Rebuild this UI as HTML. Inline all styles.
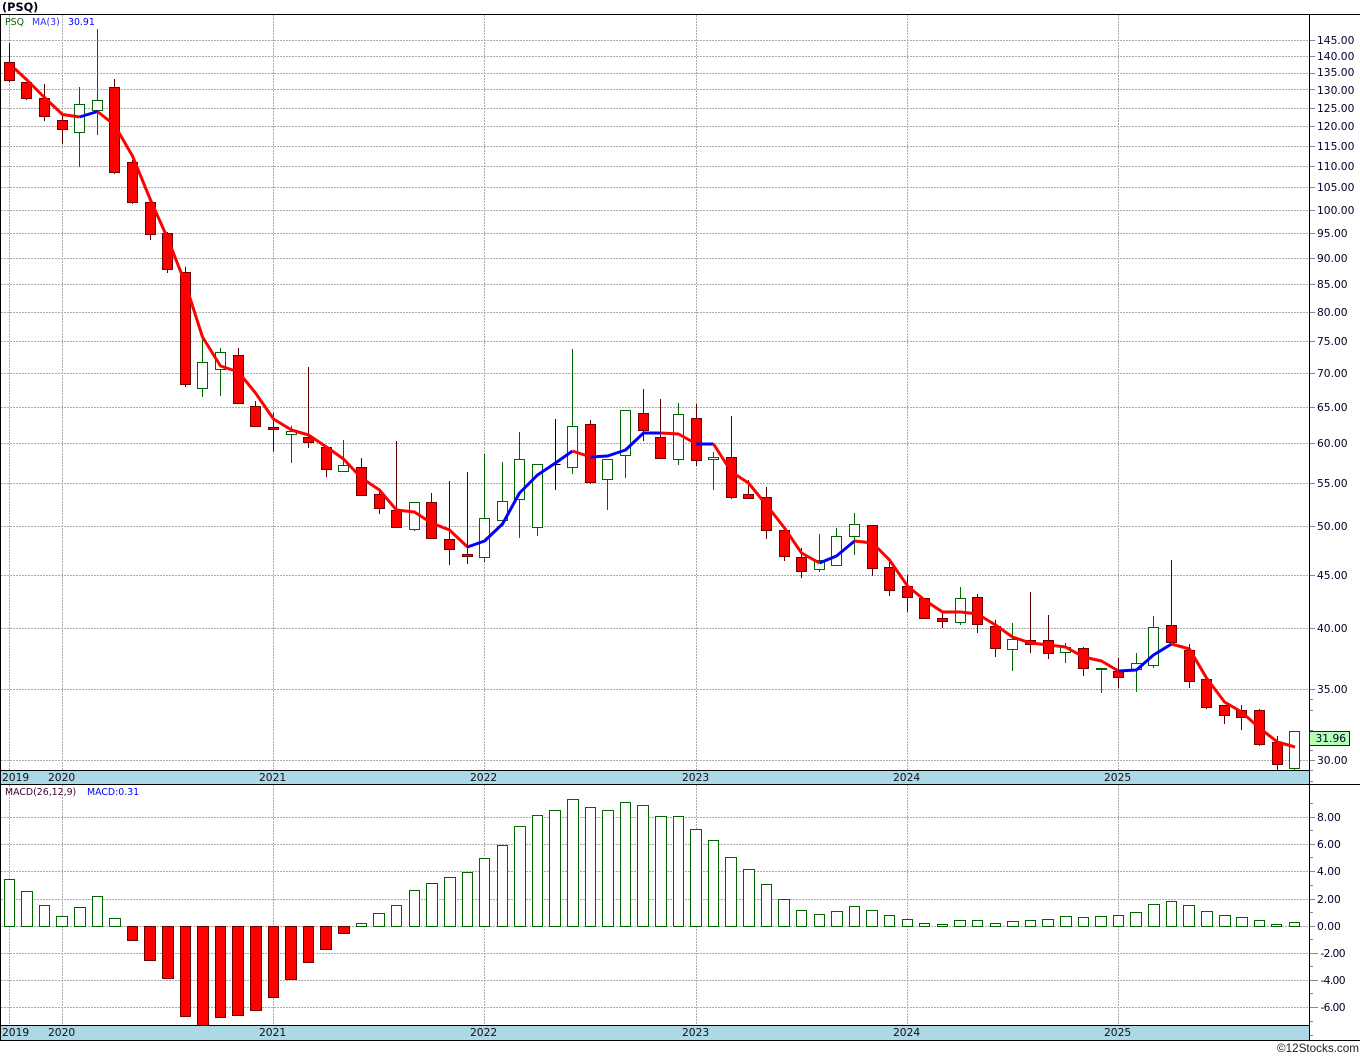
<!DOCTYPE html>
<html><head><meta charset="utf-8"><title>PSQ</title>
<style>
html,body{margin:0;padding:0;background:#fff;width:1360px;height:1056px;overflow:hidden}
svg{position:absolute;left:0;top:0;display:block}
text{font-family:"DejaVu Sans","Liberation Sans",sans-serif;font-size:10.7px;fill:#00002a}
.y{fill:#111}
.s{font-size:9.4px}
</style></head><body>
<svg width="1360" height="1056" viewBox="0 0 1360 1056" xmlns="http://www.w3.org/2000/svg">
<!-- bands -->
<rect x="1" y="770" width="1308" height="14" fill="#add8e6"/>
<rect x="1" y="1025" width="1308" height="15" fill="#add8e6"/>
<!-- grid -->
<g fill="none" stroke="#ababab" stroke-width="1" stroke-dasharray="2 1" shape-rendering="crispEdges">
<path d="M1 40.5H1309M1 56.5H1309M1 73.5H1309M1 89.5H1309M1 108.5H1309M1 126.5H1309M1 146.5H1309M1 166.5H1309M1 187.5H1309M1 210.5H1309M1 233.5H1309M1 258.5H1309M1 284.5H1309M1 312.5H1309M1 341.5H1309M1 373.5H1309M1 407.5H1309M1 443.5H1309M1 483.5H1309M1 526.5H1309M1 575.5H1309M1 628.5H1309M1 689.5H1309M1 760.5H1309"/>
<path d="M1 817.5H1309M1 844.5H1309M1 871.5H1309M1 899.5H1309M1 926.5H1309M1 953.5H1309M1 980.5H1309M1 1007.5H1309"/>
<path d="M9.5 15V770M62.5 15V770M273.5 15V770M484.5 15V770M696.5 15V770M907.5 15V770M1118.5 15V770"/>
<path d="M9.5 785V1025M62.5 785V1025M273.5 785V1025M484.5 785V1025M696.5 785V1025M907.5 785V1025M1118.5 785V1025"/>
</g>
<!-- axis ticks -->
<path shape-rendering="crispEdges" fill="none" stroke="#888" d="M1310 40.5h5M1310 56.5h5M1310 73.5h5M1310 89.5h5M1310 108.5h5M1310 126.5h5M1310 146.5h5M1310 166.5h5M1310 187.5h5M1310 210.5h5M1310 233.5h5M1310 258.5h5M1310 284.5h5M1310 312.5h5M1310 341.5h5M1310 373.5h5M1310 407.5h5M1310 443.5h5M1310 483.5h5M1310 526.5h5M1310 575.5h5M1310 628.5h5M1310 689.5h5M1310 760.5h5M1310 817.5h5M1310 844.5h5M1310 871.5h5M1310 899.5h5M1310 926.5h5M1310 953.5h8M1310 980.5h8M1310 1007.5h8M1310 699.5h3M1310 710.5h3M1310 730.5h3M1310 750.5h3M1310 770.5h3M1310 781.5h3M1310 803.5h3M1310 830.5h3M1310 857.5h3M1310 885.5h3M1310 912.5h3M1310 939.5h3M1310 966.5h3M1310 993.5h3M1310 1021.5h3M1310 1035.5h3"/>
<!-- wicks -->
<g shape-rendering="crispEdges" fill="none" stroke-width="1">
<path stroke="#5a0000" d="M9.5 43V82M26.5 82V100M44.5 84V121M62.5 116V144M114.5 79V174M132.5 160V204M150.5 200V240M167.5 232V273M185.5 267V387M238.5 348V403M255.5 401V427M273.5 413V452M308.5 367V448M326.5 447V477M361.5 458V496M379.5 490V514M396.5 441V528M431.5 493V539M449.5 481V565M467.5 472V564M590.5 420V484M643.5 389V441M660.5 399V458M696.5 404V466M731.5 416V499M748.5 480V498M766.5 487V539M784.5 530V561M801.5 548V578M872.5 525V576M889.5 561V596M907.5 575V612M924.5 598V619M942.5 611V628M977.5 594V633M995.5 620V657M1030.5 592V653M1048.5 615V659M1083.5 647V676M1118.5 658V688M1171.5 560V642M1189.5 644V688M1206.5 679V709M1224.5 705V724M1241.5 705V730M1259.5 709V746M1277.5 736V771"/>
<path stroke="#006400" d="M79.5 87V167M97.5 29V135M202.5 337V397M220.5 348V396M291.5 426V463M343.5 440V472M414.5 502V531M484.5 454V562M502.5 462V521M519.5 432V538M537.5 464V536M572.5 349V474M607.5 459V510M625.5 410V478M678.5 403V465M713.5 452V490M819.5 534V572M836.5 528V566M854.5 513V555M960.5 587V625M1012.5 623V671M1065.5 643V663M1101.5 668V693M1136.5 653V692M1153.5 616V668M1294.5 731V770"/>
<path stroke="#000" d="M555.5 419V490M550.5 464.5h10"/>
<!-- bodies -->
<path fill="#f00" stroke="#700000" d="M4.5 62.5h10v18h-10zM21.5 82.5h10v16h-10zM39.5 98.5h10v18h-10zM57.5 120.5h10v9h-10zM109.5 87.5h10v85h-10zM127.5 162.5h10v40h-10zM145.5 202.5h10v32h-10zM162.5 233.5h10v36h-10zM180.5 272.5h10v112h-10zM233.5 355.5h10v48h-10zM250.5 406.5h10v20h-10zM268.5 427.5h10v2h-10zM303.5 437.5h10v5h-10zM321.5 447.5h10v22h-10zM356.5 467.5h10v28h-10zM374.5 494.5h10v14h-10zM391.5 510.5h10v17h-10zM426.5 502.5h10v36h-10zM444.5 539.5h10v10h-10zM462.5 554.5h10v2h-10zM585.5 424.5h10v58h-10zM638.5 413.5h10v17h-10zM655.5 437.5h10v21h-10zM691.5 418.5h10v42h-10zM726.5 457.5h10v40h-10zM743.5 494.5h10v4h-10zM761.5 497.5h10v33h-10zM779.5 530.5h10v26h-10zM796.5 557.5h10v14h-10zM867.5 525.5h10v43h-10zM884.5 567.5h10v23h-10zM902.5 586.5h10v11h-10zM919.5 598.5h10v20h-10zM937.5 618.5h10v3h-10zM972.5 597.5h10v27h-10zM990.5 626.5h10v22h-10zM1025.5 640.5h10v4h-10zM1043.5 640.5h10v13h-10zM1078.5 648.5h10v20h-10zM1113.5 671.5h10v6h-10zM1166.5 625.5h10v17h-10zM1184.5 650.5h10v31h-10zM1201.5 679.5h10v28h-10zM1219.5 705.5h10v10h-10zM1236.5 710.5h10v7h-10zM1254.5 710.5h10v34h-10zM1272.5 742.5h10v22h-10z"/>
<path fill="#fff" stroke="#006400" d="M74.5 104.5h10v28h-10zM92.5 100.5h10v10h-10zM197.5 362.5h10v26h-10zM215.5 352.5h10v17h-10zM286.5 431.5h10v3h-10zM338.5 465.5h10v6h-10zM409.5 502.5h10v27h-10zM479.5 518.5h10v39h-10zM497.5 501.5h10v19h-10zM514.5 459.5h10v40h-10zM532.5 464.5h10v63h-10zM567.5 426.5h10v41h-10zM602.5 459.5h10v20h-10zM620.5 410.5h10v45h-10zM673.5 414.5h10v45h-10zM708.5 457.5h10v2h-10zM814.5 560.5h10v9h-10zM831.5 536.5h10v29h-10zM849.5 524.5h10v12h-10zM955.5 598.5h10v24h-10zM1007.5 639.5h10v10h-10zM1060.5 647.5h10v5h-10zM1096.5 668.5h10v1h-10zM1131.5 663.5h10v6h-10zM1148.5 627.5h10v38h-10zM1289.5 731.5h10v37h-10z"/>
<!-- MACD bars -->
<path fill="#fff" stroke="#006400" stroke-width="1" d="M4.5 879.5h10v47h-10zM21.5 891.5h11v35h-11zM39.5 905.5h10v21h-10zM56.5 916.5h11v10h-11zM74.5 907.5h11v19h-11zM92.5 896.5h10v30h-10zM109.5 918.5h11v8h-11zM356.5 923.5h10v3h-10zM373.5 913.5h11v13h-11zM391.5 905.5h10v21h-10zM409.5 890.5h10v36h-10zM426.5 883.5h11v43h-11zM444.5 877.5h11v49h-11zM462.5 872.5h10v54h-10zM479.5 858.5h10v68h-10zM497.5 845.5h10v81h-10zM514.5 826.5h11v100h-11zM532.5 815.5h10v111h-10zM549.5 810.5h11v116h-11zM567.5 799.5h11v127h-11zM585.5 807.5h10v119h-10zM602.5 810.5h11v116h-11zM620.5 802.5h10v124h-10zM637.5 805.5h11v121h-11zM655.5 816.5h11v110h-11zM673.5 816.5h10v110h-10zM690.5 829.5h11v97h-11zM708.5 840.5h10v86h-10zM725.5 857.5h11v69h-11zM743.5 869.5h11v57h-11zM761.5 884.5h10v42h-10zM778.5 899.5h11v27h-11zM796.5 910.5h10v16h-10zM814.5 914.5h10v12h-10zM831.5 911.5h11v15h-11zM849.5 906.5h10v20h-10zM866.5 910.5h11v16h-11zM884.5 915.5h10v11h-10zM902.5 919.5h10v7h-10zM919.5 923.5h10v3h-10zM937.5 924.5h10v2h-10zM954.5 920.5h11v6h-11zM972.5 920.5h10v6h-10zM990.5 923.5h10v3h-10zM1007.5 921.5h11v5h-11zM1025.5 920.5h10v6h-10zM1042.5 919.5h11v7h-11zM1060.5 916.5h11v10h-11zM1078.5 917.5h10v9h-10zM1095.5 916.5h11v10h-11zM1113.5 915.5h10v11h-10zM1130.5 912.5h11v14h-11zM1148.5 904.5h11v22h-11zM1166.5 901.5h10v25h-10zM1183.5 905.5h11v21h-11zM1201.5 911.5h11v15h-11zM1219.5 915.5h11v11h-11zM1236.5 917.5h11v9h-11zM1254.5 920.5h10v6h-10zM1271.5 924.5h10v2h-10zM1289.5 922.5h10v4h-10z"/>
<path fill="#f00" stroke="#700000" stroke-width="1" d="M127.5 926.5h10v14h-10zM144.5 926.5h11v34h-11zM162.5 926.5h11v52h-11zM180.5 926.5h10v90h-10zM197.5 926.5h11v99h-11zM215.5 926.5h10v91h-10zM232.5 926.5h11v89h-11zM250.5 926.5h11v84h-11zM268.5 926.5h10v71h-10zM285.5 926.5h11v53h-11zM303.5 926.5h10v36h-10zM320.5 926.5h11v23h-11zM338.5 926.5h11v7h-11z"/>
</g>
<!-- MA line -->
<g fill="none" stroke-width="3" stroke-linejoin="round" stroke-linecap="butt">
<polyline stroke="#f00" points="14.5,68.5 27,80 44.5,97.5 62.5,114.5 79.5,117"/>
<polyline stroke="#00f" points="79.5,117 97.5,111.5"/>
<polyline stroke="#f00" points="97.5,111.5 114.5,125 132.5,156 150.5,200 167.5,238 185.5,284 202.5,337 220.5,366 238.5,372 255.5,393 273.5,419 291.5,430 308.5,435 326.5,447 343.5,459 361.5,478 379.5,490 396.5,510 414.5,512 431.5,523 449.5,530 467.5,547"/>
<polyline stroke="#00f" points="467.5,547 484.5,541 502.5,524 519.5,493 537.5,475 555.5,463 572.5,451"/>
<polyline stroke="#f00" points="572.5,451 590.5,457"/>
<polyline stroke="#00f" points="590.5,457 607.5,456 625.5,450 643.5,433 660.5,433"/>
<polyline stroke="#f00" points="660.5,433 678.5,434 696.5,444"/>
<polyline stroke="#00f" points="696.5,444 713.5,444"/>
<polyline stroke="#f00" points="713.5,444 731.5,472 748.5,483 766.5,505 784.5,528 801.5,553 819.5,563"/>
<polyline stroke="#00f" points="819.5,563 836.5,556 854.5,541"/>
<polyline stroke="#f00" points="854.5,541 872.5,543 889.5,560 907.5,586 924.5,600 942.5,612 960.5,612 977.5,614 995.5,625 1012.5,637 1030.5,643 1048.5,645 1065.5,647 1083.5,657 1101.5,661 1118.5,671"/>
<polyline stroke="#00f" points="1118.5,671 1136.5,670 1153.5,655 1171.5,644"/>
<polyline stroke="#f00" points="1171.5,644 1189.5,649 1206.5,678 1224.5,702 1241.5,712 1259.5,728 1277.5,742 1295,747"/>
</g>
<!-- frame -->
<path shape-rendering="crispEdges" fill="none" stroke="#000" d="M0 14.5H1360M0.5 14V1041M1309.5 14V1041M1 770.5H1309M0 784.5H1360M1 1025.5H1309M0 1040.5H1360"/>
<!-- price labels -->
<g>
<text x="1317" y="44">145.00</text><text x="1317" y="60">140.00</text><text x="1317" y="76">135.00</text><text x="1317" y="94">130.00</text><text x="1317" y="112">125.00</text><text x="1317" y="130">120.00</text><text x="1317" y="150">115.00</text><text x="1317" y="170">110.00</text><text x="1317" y="191">105.00</text><text x="1317" y="214">100.00</text>
<text x="1317" y="237">95.00</text><text x="1317" y="262">90.00</text><text x="1317" y="288">85.00</text><text x="1317" y="316">80.00</text><text x="1317" y="345">75.00</text><text x="1317" y="377">70.00</text><text x="1317" y="411">65.00</text><text x="1317" y="447">60.00</text><text x="1317" y="487">55.00</text><text x="1317" y="530">50.00</text><text x="1317" y="579">45.00</text><text x="1317" y="632">40.00</text><text x="1317" y="693">35.00</text><text x="1317" y="764">30.00</text>
<text x="1317" y="821">8.00</text><text x="1317" y="848">6.00</text><text x="1317" y="875">4.00</text><text x="1317" y="903">2.00</text><text x="1317" y="930">0.00</text><text x="1320.5" y="957" textLength="25" lengthAdjust="spacing">-2.00</text><text x="1320.5" y="984" textLength="25" lengthAdjust="spacing">-4.00</text><text x="1320.5" y="1011" textLength="25" lengthAdjust="spacing">-6.00</text>
</g>
<rect x="1309.5" y="731.5" width="40" height="14" fill="#b4ffb4" stroke="#003000" shape-rendering="crispEdges"/>
<text x="1315.5" y="742">31.96</text>
<!-- years -->
<g>
<text class="y" x="2" y="781">2019</text><text class="y" x="48" y="781">2020</text><text class="y" x="259" y="781">2021</text><text class="y" x="470" y="781">2022</text><text class="y" x="682" y="781">2023</text><text class="y" x="893" y="781">2024</text><text class="y" x="1104" y="781">2025</text>
<text class="y" x="2" y="1036">2019</text><text class="y" x="48" y="1036">2020</text><text class="y" x="259" y="1036">2021</text><text class="y" x="470" y="1036">2022</text><text class="y" x="682" y="1036">2023</text><text class="y" x="893" y="1036">2024</text><text class="y" x="1104" y="1036">2025</text>
</g>
<!-- headers -->
<text x="2" y="11" style="font-size:11.3px;font-weight:bold;fill:#00001a">(PSQ)</text>
<text class="s" x="5" y="25" style="fill:#006400">PSQ</text>
<text class="s" x="32" y="25" style="fill:#3030ff">MA(3)</text>
<text class="s" x="68" y="25" style="fill:#0000ff">30.91</text>
<text class="s" x="5" y="795" style="fill:#400030">MACD(26,12,9)</text>
<text class="s" x="87" y="795" style="fill:#0000ff">MACD:0.31</text>
<text x="1359" y="1052" text-anchor="end" style="font-family:'Liberation Sans',Arial,sans-serif;font-size:11.7px;fill:#222">©12Stocks.com</text>
</svg>
</body></html>
